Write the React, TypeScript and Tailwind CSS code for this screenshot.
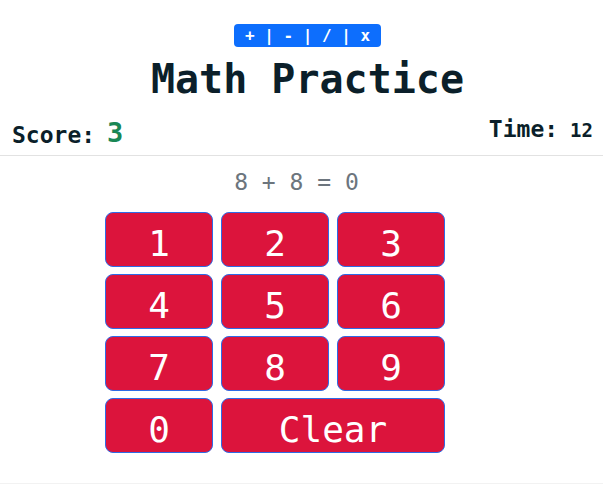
import React, { useState } from 'react';

const keys = ['1', '2', '3', '4', '5', '6', '7', '8', '9', '0'];

const App: React.FC = () => {
  const [answer, setAnswer] = useState<string>('0');

  const press = (k: string) => {
    setAnswer(prev => (prev === '0' ? k : prev + k));
  };

  return (
    <div className="min-h-screen bg-white text-[#0b1f2a]" style={{ fontFamily: '"DejaVu Sans Mono", monospace' }}>
      <div className="flex flex-col items-center pt-[24px] pl-[12px]">
        <div className="h-[23px] w-[147px] rounded-[4px] bg-[#0d6efd] text-white text-[16px] font-bold leading-[23px] text-center">
          + | - | / | x
        </div>
        <h1 className="mt-[8px] text-[40px] font-bold leading-[48px]">Math Practice</h1>
      </div>

      <div className="flex items-end justify-between px-[10px] mt-[12px] pb-[6px] border-b border-[#e2e2e2]">
        <div className="flex items-end gap-[12px] pl-[2px]">
          <span className="text-[23px] font-bold leading-[28px]">Score:</span>
          <span className="text-[27px] font-bold leading-[32px] text-[#198754]">3</span>
        </div>
        <div className="flex items-end gap-[12px] pb-[6px]">
          <span className="text-[23px] font-bold leading-[28px]">Time:</span>
          <span className="text-[19px] font-bold leading-[26px]">12</span>
        </div>
      </div>

      <div className="border-b border-[#f2f2f2] pb-[30px]">
        <div className="text-center text-[23px] leading-[28px] text-[#6c757d] mt-[12px] pr-[10px]">
          8 + 8 = {answer}
        </div>

        <div className="ml-[105px] mt-[16px] grid w-[340px] grid-cols-3 gap-x-[8px] gap-y-[7px]">
          {keys.map(k => (
            <button
              key={k}
              onClick={() => press(k)}
              className="h-[55px] pt-[8px] rounded-[8px] border border-[#2f6be6] bg-[#dc143c] text-white text-[36px] leading-none"
            >
              {k}
            </button>
          ))}
          <button
            onClick={() => setAnswer('0')}
            className="col-span-2 h-[55px] pt-[8px] rounded-[8px] border border-[#2f6be6] bg-[#dc143c] text-white text-[36px] leading-none"
          >
            Clear
          </button>
        </div>
      </div>
    </div>
  );
};

export default App;
